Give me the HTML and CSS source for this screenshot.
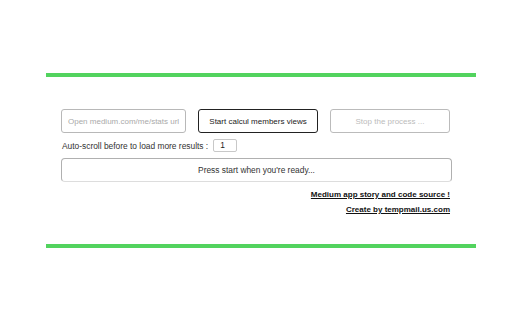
FILE: index.html
```html
<!DOCTYPE html>
<html>
<head>
<meta charset="utf-8">
<link rel="stylesheet" href="styles.css">
</head>
<body>
<div class="wrap">
  <div class="bar"></div>
  <div class="content">
    <div class="row">
      <div class="field url">Open medium.com/me/stats url</div>
      <div class="btn start">Start calcul members views</div>
      <div class="btn stop">Stop the process ...</div>
    </div>
    <div class="scroll">
      <span>Auto-scroll before to load more results :</span>
      <span class="num">1</span>
    </div>
    <div class="status">Press start when you're ready...</div>
    <div class="links">
      <a href="#">Medium app story and code source !</a>
      <a href="#">Create by tempmail.us.com</a>
    </div>
  </div>
  <div class="bar"></div>
</div>
</body>
</html>
```
FILE: styles.css
```css
html, body {
  margin: 0;
  background: #fff;
}
body {
  font-family: "Liberation Sans", Arial, sans-serif;
  font-size: 8px;
  color: #333;
}
.wrap {
  margin: 73px 0 0 46px;
  width: 430px;
}
.bar {
  height: 4px;
  background: #52d35e;
}
.content {
  padding: 32px 24px 30px 15px;
}
.row {
  display: flex;
  gap: 12px;
}
.field, .btn {
  box-sizing: border-box;
  height: 24px;
  display: flex;
  align-items: center;
  border-radius: 3px;
}
.field.url {
  width: 125px;
  padding-left: 6px;
  border: 1px solid #b8b8b8;
  color: #aaa;
}
.btn {
  width: 120px;
  justify-content: center;
}
.btn.start {
  border: 1.5px solid #222;
  color: #222;
}
.btn.stop {
  border: 1px solid #bbb;
  color: #bbb;
}
.scroll {
  display: flex;
  align-items: center;
  gap: 5px;
  margin-top: 6px;
  padding-left: 1px;
  font-size: 8.4px;
  color: #333;
}
.num {
  box-sizing: border-box;
  width: 24px;
  height: 13px;
  border: 1px solid #c8c8c8;
  border-radius: 2px;
  padding-left: 6px;
  line-height: 11px;
  color: #222;
}
.status {
  box-sizing: border-box;
  margin-top: 6px;
  width: 391px;
  height: 24px;
  border: 1px solid #b0b0b0;
  border-bottom-color: #ddd;
  border-radius: 4px;
  display: flex;
  align-items: center;
  justify-content: center;
  font-size: 8.4px;
  color: #333;
}
.links {
  display: flex;
  flex-direction: column;
  align-items: flex-end;
  gap: 6px;
  margin-top: 8px;
  width: 389px;
}
.links a {
  color: #111;
  font-weight: bold;
  text-decoration: underline;
  line-height: 9px;
}
```
